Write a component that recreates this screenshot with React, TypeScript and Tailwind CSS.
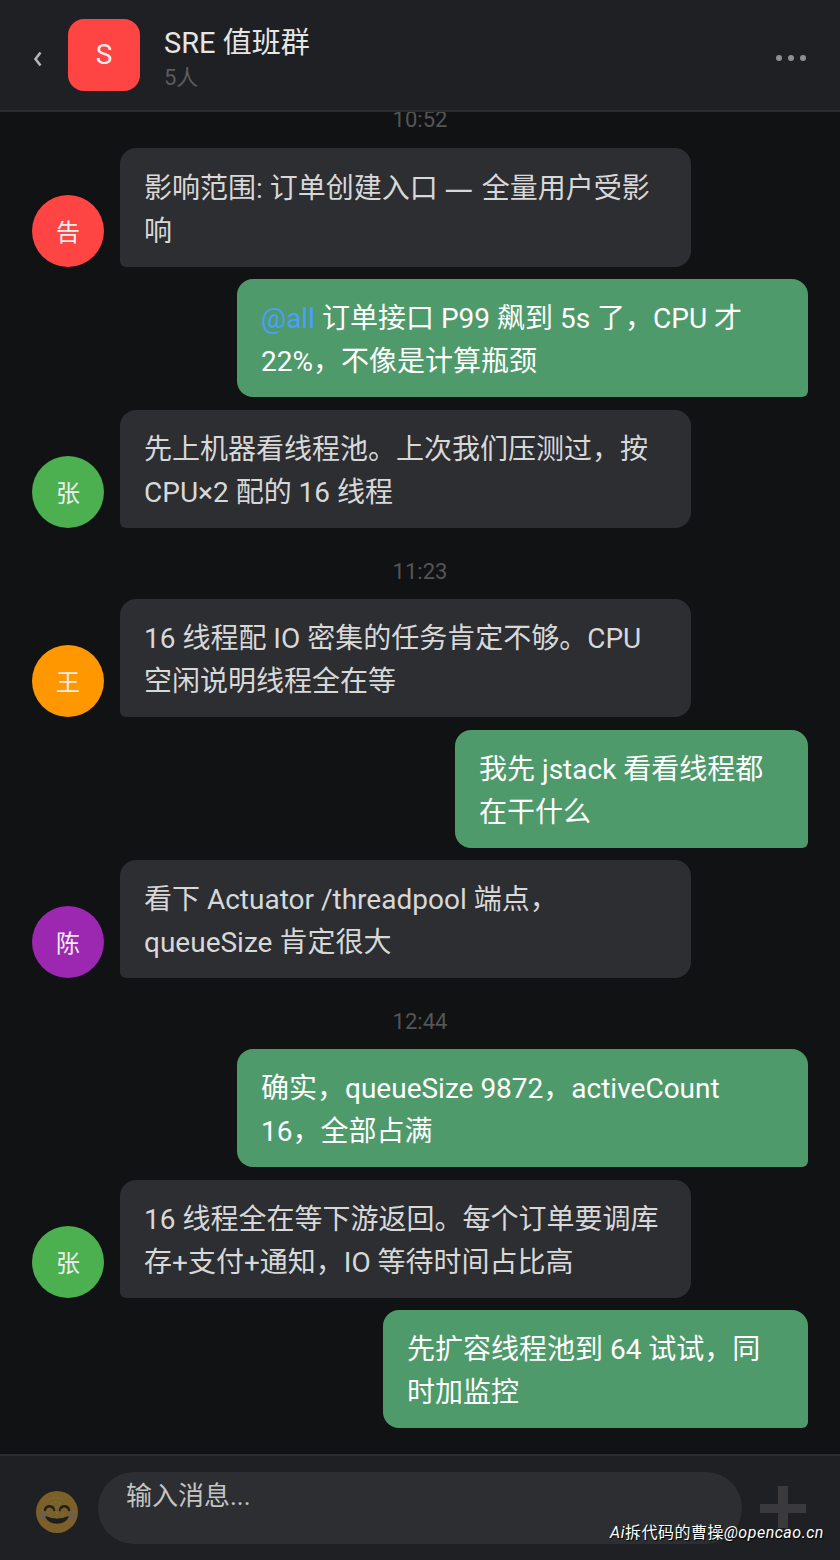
const font = { fontFamily: 'Roboto, "Noto Sans CJK SC", sans-serif' };

type Msg =
  | { time: string }
  | { side: 'left'; name: string; color: string; lines: React.ReactNode[] }
  | { side: 'right'; width: string; lines: React.ReactNode[] };

const messages: Msg[] = [
  { time: '10:52' },
  {
    side: 'left',
    name: '告',
    color: 'bg-[#ff4444]',
    lines: [
      <>
        影响范围: 订单创建入口 <span className="font-['Noto_Sans'] pr-[2px]">—</span> 全量用户受影
      </>,
      '响',
    ],
  },
  {
    side: 'right',
    width: 'w-[571px]',
    lines: [
      <>
        <span className="text-[#4a9eff]">@all</span> 订单接口 P99 飙到 5s 了，CPU 才
      </>,
      '22%，不像是计算瓶颈',
    ],
  },
  { side: 'left', name: '张', color: 'bg-[#4caf50]', lines: ['先上机器看线程池。上次我们压测过，按', 'CPU×2 配的 16 线程'] },
  { time: '11:23' },
  { side: 'left', name: '王', color: 'bg-[#ff9800]', lines: ['16 线程配 IO 密集的任务肯定不够。CPU', '空闲说明线程全在等'] },
  { side: 'right', width: 'w-[353px]', lines: ['我先 jstack 看看线程都', '在干什么'] },
  { side: 'left', name: '陈', color: 'bg-[#9c27b0]', lines: ['看下 Actuator /threadpool 端点，', 'queueSize 肯定很大'] },
  { time: '12:44' },
  { side: 'right', width: 'w-[571px]', lines: ['确实，queueSize 9872，activeCount', '16，全部占满'] },
  { side: 'left', name: '张', color: 'bg-[#4caf50]', lines: ['16 线程全在等下游返回。每个订单要调库', '存+支付+通知，IO 等待时间占比高'] },
  { side: 'right', width: 'w-[425px]', lines: ['先扩容线程池到 64 试试，同', '时加监控'] },
];

function Emoji() {
  return (
    <svg width="44" height="44" viewBox="0 0 44 44" className="shrink-0">
      <circle cx="22" cy="22" r="21" fill="#7d5f29" />
      <circle cx="8" cy="26" r="4" fill="#6e5f4d" />
      <circle cx="36" cy="26" r="4" fill="#6e5f4d" />
      <path d="M10 20c1-5 8-5 9 0M25 20c1-5 8-5 9 0" fill="none" stroke="#1e1e1e" strokeWidth="2.4" strokeLinecap="round" />
      <path d="M11 27c4 8 18 8 22 0-6 3-16 3-22 0z" fill="#1e1e1e" stroke="#1e1e1e" strokeWidth="1.5" strokeLinejoin="round" />
      <path d="M15 9h.01M19 8h.01M23 8h.01M27 9h.01M21 12h.01M17 14h.01M25 13h.01M22 17h.01M18 20h.01M26 20h.01M22 23h.01M16 25h.01M28 25h.01M22 28h.01" stroke="#4caf50" strokeWidth="1" strokeLinecap="round" />
    </svg>
  );
}

export default function App() {
  return (
    <div className="relative w-[840px] h-[1560px] flex flex-col overflow-hidden bg-[#111214]" style={font}>
      {/* header */}
      <header className="h-[112px] shrink-0 flex items-center bg-[#1e2024] border-b-2 border-[#2a2c30] pl-8 pr-[34px]">
        <svg width="12" height="18" viewBox="0 0 12 18" className="shrink-0 mr-6 mt-[8px]">
          <path d="M8.5 2.5 3.5 9l5 6.5" fill="none" stroke="#b4b4b4" strokeWidth="2.6" />
        </svg>
        <div className="w-[72px] h-[72px] shrink-0 rounded-2xl bg-[#ff4444] flex items-center justify-center text-[#eeeeee] text-[28px]">
          S
        </div>
        <div className="ml-6 flex-1 pt-[5px]">
          <div className="text-[29px] leading-[40px] text-[#e6e6e6]">SRE 值班群</div>
          <div className="text-[22px] leading-[30px] text-[#5c5c5c]">5人</div>
        </div>
        <div className="flex gap-[6px] mt-[6px]">
          <span className="w-[6px] h-[6px] rounded-full bg-[#8f8f8f]" />
          <span className="w-[6px] h-[6px] rounded-full bg-[#8f8f8f]" />
          <span className="w-[6px] h-[6px] rounded-full bg-[#8f8f8f]" />
        </div>
      </header>

      {/* messages, pinned to the bottom */}
      <main className="flex-1 min-h-0 overflow-hidden flex flex-col justify-end gap-[12.5px] pl-8 pr-8 pb-[25.8px]">
        {messages.map((m, i) => {
          if ('time' in m) {
            return (
              <div key={i} className="shrink-0 h-[46.15px] pb-[7px] flex items-end justify-center text-[22px] leading-4 text-[#555555]">
                {m.time}
              </div>
            );
          }
          if (m.side === 'left') {
            return (
              <div key={i} className="shrink-0 flex items-end gap-4">
                <div className={`w-[72px] h-[72px] shrink-0 rounded-full ${m.color} flex items-center justify-center pt-1 text-[24px] text-[#eeeeee]`}>
                  {m.name}
                </div>
                <div className="w-[571px] rounded-2xl rounded-bl-md bg-[#2c2e32] px-6 pt-[18px] pb-[14px] text-[28px] leading-[43px] text-[#d8d8d8] whitespace-nowrap">
                  {m.lines.map((l, j) => (
                    <div key={j}>{l}</div>
                  ))}
                </div>
              </div>
            );
          }
          return (
            <div key={i} className="shrink-0 flex justify-end">
              <div className={`${m.width} rounded-2xl rounded-br-md bg-[#4f9a6b] px-6 pt-[18px] pb-[14px] text-[28px] leading-[43px] text-white whitespace-nowrap`}>
                {m.lines.map((l, j) => (
                  <div key={j}>{l}</div>
                ))}
              </div>
            </div>
          );
        })}
      </main>

      {/* input bar */}
      <footer className="h-[106px] shrink-0 flex items-start bg-[#1e2024] border-t-2 border-[#2a2c30] pl-[35px] pt-4">
        <div className="mt-[18px] shrink-0">
          <Emoji />
        </div>
        <div className="ml-[19px] w-[644px] h-[72px] shrink-0 rounded-[36px] bg-[#2c2e32] px-7 pt-[6px] text-[26px] leading-[36px] text-[#c4c4c4]">
          输入消息...
        </div>
        <svg width="46" height="42" viewBox="0 0 46 42" className="ml-[18px] mt-[14px] shrink-0">
          <path d="M18 0h10v18h18v9H28v15H18V27H0v-9h18z" fill="#3a3a3d" />
        </svg>
      </footer>

      {/* watermark */}
      <div className="absolute left-[610px] top-[1521px] text-[16px] leading-6 tracking-[0.5px] text-white whitespace-nowrap [text-shadow:1px_1px_1px_#000]">
        <span className="italic">Ai</span>拆代码的曹操<span className="italic">@opencao.cn</span>
      </div>
    </div>
  );
}
